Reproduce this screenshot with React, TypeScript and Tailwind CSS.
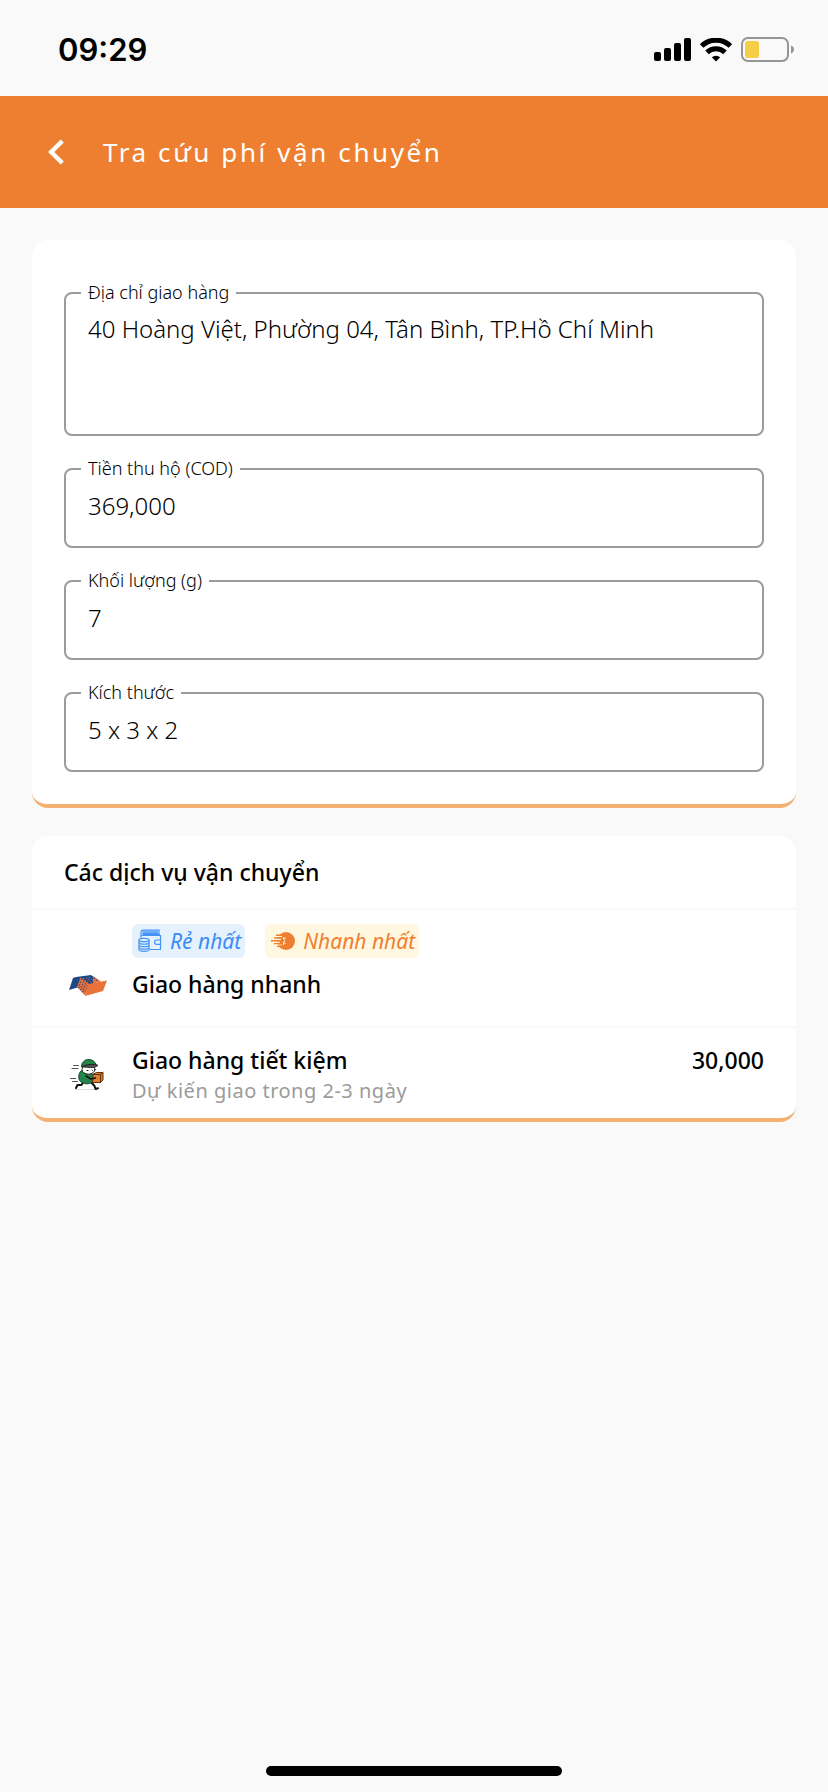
import { useState } from 'react'
import type { ReactNode } from 'react'

type Service = {
  id: string
  name: string
  logo: ReactNode
  price?: string
  note?: string
  cheapest?: boolean
  fastest?: boolean
}

function SignalIcon() {
  return (
    <svg viewBox="0 0 37 24" className="h-6 w-[37px]" fill="#000" aria-hidden="true">
      <rect x="0" y="14" width="7" height="9" rx="2" />
      <rect x="10" y="10" width="7" height="13" rx="2" />
      <rect x="20" y="5" width="7" height="18" rx="2" />
      <rect x="30" y="0" width="7" height="23" rx="2" />
    </svg>
  )
}

function WifiIcon() {
  return (
    <svg viewBox="0 0 32 24" className="h-6 w-8" fill="none" stroke="#000" strokeWidth="5" aria-hidden="true">
      <path d="M1.600 8a20.600 20.600 0 0 1 28.800 0" />
      <path d="M7 14.400a12.900 12.900 0 0 1 18 0" />
      <path d="M16 23.600l-4.200-4.300a6.200 6.200 0 0 1 8.400 0z" fill="#000" stroke="none" />
    </svg>
  )
}

function BatteryIcon() {
  return (
    <svg viewBox="0 0 54 26" className="h-[26px] w-[54px]" aria-hidden="true">
      <rect x="1" y="1" width="46" height="23" rx="6" fill="none" stroke="#959595" strokeWidth="2" />
      <rect x="4" y="4" width="14" height="17" rx="2.500" fill="#f6cd46" />
      <path d="M50 8.500c2 .8 3 2.200 3 4s-1 3.200-3 4z" fill="#959595" />
    </svg>
  )
}

function WalletIcon() {
  return (
    <svg viewBox="0 0 24 24" className="h-6 w-6" fill="none" stroke="#4593f5" strokeWidth="1.200" aria-hidden="true">
      <path d="M3 9V3.500C3 2 4 1.200 5.500 1.200H21v5" />
      <path d="M4.500 2.800H20M4.500 4.300H20M4.500 5.600H22" />
      <path d="M3.500 6.500H22.500V20.500H12" />
      <path d="M22.500 11h-3.800a2.200 2.200 0 0 0 0 4.400h3.800" />
      <ellipse cx="6" cy="11" rx="5" ry="1.700" fill="#e5f1fd" />
      <path d="M1 11v9.500c0 1 2.200 1.800 5 1.800s5-.8 5-1.800V11" />
      <path d="M1 13.500c0 1 2.200 1.700 5 1.700s5-.7 5-1.700M1 16c0 1 2.200 1.700 5 1.700s5-.7 5-1.700M1 18.500c0 1 2.200 1.700 5 1.700s5-.7 5-1.700" />
    </svg>
  )
}

function FastIcon() {
  return (
    <svg viewBox="0 0 24 24" className="h-6 w-6" aria-hidden="true">
      <circle cx="15" cy="12" r="9" fill="#ee7f31" />
      <path d="M5 7.700h6M3 10.400h7M2 13.200h7M4 16h7" stroke="#fff7e0" strokeWidth="1.200" />
      <path d="M5 6.200h8M3 9h9M0 11.800h11M3 14.600h9M6 17.400h7" stroke="#ee7f31" strokeWidth="1.400" />
      <path d="M12.500 8v2l2.200-1M12.500 16v-2.500l2 1M12.800 10.500l1.200 1.200-1.200 1.300" fill="none" stroke="#fff7e0" strokeWidth="1" />
    </svg>
  )
}

function GhnLogo() {
  return (
    <svg viewBox="0 0 48 48" className="h-12 w-12" aria-hidden="true">
      <path d="M12 17l15-2 4 3-1 6-6 2-9 1-10 3 4-12z" fill="#1e4785" />
      <path d="M16.500 17.500L13 27l8 8.500 4-11.500z" fill="#e9713a" />
      <path d="M29 16l8 5.500-8 2z" fill="#e9713a" />
      <g stroke="#e9713a" strokeWidth="1" strokeDasharray="1.200 1.400">
        <path d="M19 18l6 5.500M22 17.500l6 5.500M25 17l5 5" />
      </g>
      <g stroke="#1e4785" strokeWidth="1.100" strokeDasharray="1.200 1.600">
        <path d="M17 19.500l6.500 6.500M16 22l6.500 6.500M15 24.500l6.500 6.500M14.500 27l6 6M30 18l4 3.500" />
      </g>
      <path d="M24 24L43 20.500l-4 10.500L21 36z" fill="#e9713a" />
    </svg>
  )
}

function GhtkLogo() {
  return (
    <svg viewBox="0 0 48 48" className="h-12 w-12" strokeLinecap="round" strokeLinejoin="round" aria-hidden="true">
      <path d="M9.500 14.500h5M8 17.500h6M6.500 27.500h5M8.500 30.500h5" stroke="#555" strokeWidth="1" />
      <path d="M11 38.500h22" stroke="#ddd" strokeWidth="1" />
      <path d="M20 30l-2.500 4h-4l-1.500 3M27 31l3.500 4 1 3 2.500-.8" fill="none" stroke="#111" strokeWidth="2" />
      <path d="M17 20c-3 3-3 8-.5 10.500 3 3 9 3 11.500.5l1-6-3-5.500z" fill="#238548" stroke="#114c27" strokeWidth="1" />
      <ellipse cx="24.500" cy="18.500" rx="6.500" ry="4.700" fill="#fff" stroke="#222" strokeWidth="1" />
      <path d="M17.500 15.500c0-4 3-7 7-7s6.500 2 7.500 5l-9 2z" fill="#238548" stroke="#114c27" strokeWidth="1" />
      <path d="M18 15.500c5-2 11-3 16-1.200-2.500 2-4 2.200-7 2.200z" fill="#555" stroke="#222" strokeWidth="1" />
      <path d="M23 19.500h1M28 19l.5.500" stroke="#222" strokeWidth="1" />
      <path d="M29.500 23l3-1.500h6.500v7.500l-2.500 2.500h-7.500z" fill="#e2812e" stroke="#5c3010" strokeWidth="1" />
      <path d="M36.500 23.500l2.500-2M36.500 23.500v8M29.500 23.500h7" stroke="#5c3010" strokeWidth="1" />
      <path d="M22 25l5 3 4.500-1" fill="none" stroke="#111" strokeWidth="1.500" />
    </svg>
  )
}

function StatusBar() {
  return (
    <div className="flex h-24 items-center justify-between pr-[33px] pl-[58px]">
      <span className="pt-1 font-['Inter'] text-[31px] leading-10 font-semibold text-black">09:29</span>
      <div className="flex items-center gap-[9px] pt-1">
        <SignalIcon />
        <WifiIcon />
        <BatteryIcon />
      </div>
    </div>
  )
}

function Field({ id, label, value, multiline }: { id: string; label: string; value: string; multiline?: boolean }) {
  const [text, setText] = useState(value)

  return (
    <div className="relative rounded-lg border-2 border-[#9b9b9b]">
      <label
        htmlFor={id}
        className="absolute -top-3 left-[15px] bg-white px-[7px] text-[18px] leading-5 font-light text-black"
      >
        {label}
      </label>
      {multiline ? (
        <textarea
          id={id}
          value={text}
          onChange={(e) => setText(e.target.value)}
          className="block h-[140px] w-full resize-none bg-transparent px-[22px] pt-[19px] text-[24px] leading-8 font-light text-black outline-none"
        />
      ) : (
        <input
          id={id}
          type="text"
          value={text}
          onChange={(e) => setText(e.target.value)}
          className="block h-[76px] w-full bg-transparent px-[22px] pb-1.5 text-[24px] leading-8 font-light text-black outline-none"
        />
      )}
    </div>
  )
}

const services: Service[] = [
  { id: 'ghn', name: 'Giao hàng nhanh', logo: <GhnLogo />, cheapest: true, fastest: true },
  { id: 'ghtk', name: 'Giao hàng tiết kiệm', logo: <GhtkLogo />, price: '30,000', note: 'Dự kiến giao trong 2-3 ngày' },
]

function ServiceRow({ service }: { service: Service }) {
  const hasBadge = service.cheapest || service.fastest

  return (
    <li className={`border-t-2 border-[#f9f9f9] px-8 ${hasBadge ? 'pt-3.5 pb-[26px]' : 'pt-4 pb-3'}`}>
      {hasBadge && (
        <div className="mb-2.5 flex gap-5 pl-[68px] text-[21px] leading-[34px] italic">
          {service.cheapest && (
            <span className="flex items-center gap-2 rounded-md bg-[#e5f1fd] pr-1 pl-1.5 text-[#3b8cf5]">
              <WalletIcon />
              Rẻ nhất
            </span>
          )}
          {service.fastest && (
            <span className="flex items-center gap-2 rounded-md bg-[#fff7e0] pr-1 pl-1.5 text-[#ee7f31]">
              <FastIcon />
              Nhanh nhất
            </span>
          )}
        </div>
      )}
      <div className="flex items-center gap-5">
        <div className="-my-2 shrink-0">{service.logo}</div>
        <div className="min-w-0 flex-1">
          <div className="flex justify-between text-[23px] leading-8 font-medium text-black">
            <span>{service.name}</span>
            {service.price && <span>{service.price}</span>}
          </div>
          {service.note && <p className="text-[20px] leading-[30px] tracking-wide text-[#9b9b9b]">{service.note}</p>}
        </div>
      </div>
    </li>
  )
}

export default function App() {
  return (
    <div className="flex min-h-screen flex-col bg-[#f9f9f9] font-['Noto_Sans',sans-serif]">
      <StatusBar />

      <header className="flex h-28 items-center gap-[39px] bg-[#ee7f31] px-12 text-white">
        <button type="button" aria-label="Quay lại">
          <svg viewBox="0 0 16 26" className="h-[26px] w-4" fill="none" stroke="currentColor" strokeWidth="4.500" aria-hidden="true">
            <path d="M14.200 2L3.200 13l11 11" />
          </svg>
        </button>
        <h1 className="text-[26px] leading-9 tracking-widest">Tra cứu phí vận chuyển</h1>
      </header>

      <main className="flex flex-col gap-7 px-8 pt-8">
        <form className="flex flex-col gap-8 rounded-2xl border-b-4 border-[#f3b070] bg-white px-8 pt-[52px] pb-8">
          <Field id="address" label="Địa chỉ giao hàng" value="40 Hoàng Việt, Phường 04, Tân Bình, TP.Hồ Chí Minh" multiline />
          <Field id="cod" label="Tiền thu hộ (COD)" value="369,000" />
          <Field id="weight" label="Khối lượng (g)" value="7" />
          <Field id="size" label="Kích thước" value="5 x 3 x 2" />
        </form>

        <section className="rounded-2xl border-b-4 border-[#f3b070] bg-white">
          <h2 className="px-8 py-5 text-[23px] leading-8 font-medium text-black">Các dịch vụ vận chuyển</h2>
          <ul>
            {services.map((s) => (
              <ServiceRow key={s.id} service={s} />
            ))}
          </ul>
        </section>
      </main>

      <div className="mt-auto flex justify-center pb-4">
        <div className="h-2.5 w-[296px] rounded-full bg-black" />
      </div>
    </div>
  )
}
